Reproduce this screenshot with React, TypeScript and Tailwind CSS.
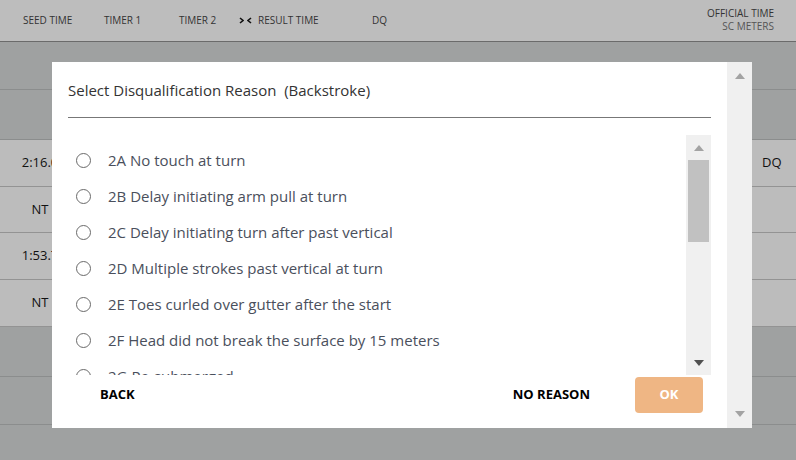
import React from 'react';

const reasons = [
  '2A No touch at turn',
  '2B Delay initiating arm pull at turn',
  '2C Delay initiating turn after past vertical',
  '2D Multiple strokes past vertical at turn',
  '2E Toes curled over gutter after the start',
  '2F Head did not break the surface by 15 meters',
  '2G Re-submerged',
];

const rows = [
  { h: 'h-[48px]', tone: 'dark', time: '', dq: '' },
  { h: 'h-[50px]', tone: 'dark', time: '', dq: '' },
  { h: 'h-[47px]', tone: 'light', time: '2:16.0', dq: 'DQ' },
  { h: 'h-[46px]', tone: 'light', time: 'NT', dq: '' },
  { h: 'h-[47px]', tone: 'light', time: '1:53.7', dq: '' },
  { h: 'h-[47px]', tone: 'light', time: 'NT', dq: '' },
  { h: 'h-[50px]', tone: 'dark', time: '', dq: '' },
  { h: 'h-[48px]', tone: 'dark', time: '', dq: '' },
];

const Triangle = ({ up, color }: { up?: boolean; color: string }) => (
  <svg width="10" height="6" viewBox="0 0 10 6">
    <polygon points={up ? '0,6 5,0 10,6' : '0,0 10,0 5,6'} fill={color} />
  </svg>
);

export default function App() {
  return (
    <div
      className="relative w-[796px] h-[460px] overflow-hidden bg-[#9fa1a1]"
      style={{ fontFamily: '"Open Sans", "Noto Sans", Arial, sans-serif' }}
    >
      {/* Header */}
      <div className="h-[42px] bg-[#bdbdbd] border-b border-[#6b6b6b] flex items-center text-[10px] text-[#333] relative">
        <span className="absolute left-[23px] top-[13px]">SEED TIME</span>
        <span className="absolute left-[104px] top-[13px]">TIMER 1</span>
        <span className="absolute left-[179px] top-[13px]">TIMER 2</span>
        <span className="absolute left-[239px] top-[13px] flex items-center gap-[6px]">
          <span className="flex items-center gap-[1px] font-bold text-black">
            <svg width="5" height="7" viewBox="0 0 5 7"><path d="M1 1 L4 3.5 L1 6" stroke="#111" strokeWidth="1.6" fill="none" /></svg>
            <svg width="5" height="7" viewBox="0 0 5 7" className="ml-[2px]"><path d="M4 1 L1 3.5 L4 6" stroke="#111" strokeWidth="1.6" fill="none" /></svg>
          </span>
          RESULT TIME
        </span>
        <span className="absolute left-[372px] top-[13px]">DQ</span>
        <div className="absolute right-[22px] top-[7px] text-right leading-[13px]">
          <div>OFFICIAL TIME</div>
          <div className="text-[#555]">SC METERS</div>
        </div>
      </div>

      {/* Rows */}
      {rows.map((r, i) => (
        <div
          key={i}
          className={`${r.h} flex items-center border-b text-[13px] text-[#111] ${
            r.tone === 'light' ? 'bg-[#bcbcbc] border-[#939393]' : 'bg-[#9fa1a1] border-[#8b8d8d]'
          }`}
        >
          <div className="w-[80px] text-center">{r.time}</div>
          <div className="flex-1" />
          <div className="w-[34px]">{r.dq}</div>
        </div>
      ))}

      {/* Modal */}
      <div className="absolute left-[52px] top-[62px] w-[700px] h-[366px] bg-white flex">
        <div className="w-[675px] flex flex-col px-4">
          <div className="h-[56px] flex items-center border-b border-[#777] text-[15px] text-[#333] pt-[1px]">
            Select Disqualification Reason&nbsp;&nbsp;(Backstroke)
          </div>
          <div className="mt-[17px] h-[240px] flex">
            <div className="flex-1 overflow-hidden pt-[7px]">
              {reasons.map((r) => (
                <div key={r} className="h-[36px] flex items-center pl-2 text-[15px] text-[#4a4f5c]">
                  <span className="w-[15px] h-[15px] rounded-full border-[1.5px] border-[#6a6a6a] mr-[17px] shrink-0" />
                  {r}
                </div>
              ))}
            </div>
            <div className="w-[25px] bg-[#f0f0f0] flex flex-col items-center">
              <div className="h-[25px] flex items-center justify-center">
                <Triangle up color="#a3a3a3" />
              </div>
              <div className="w-[21px] h-[82px] bg-[#c1c1c1]" />
              <div className="flex-1" />
              <div className="h-[25px] flex items-center justify-center">
                <Triangle color="#505050" />
              </div>
            </div>
          </div>
          <div className="flex items-center h-[37px] mt-[1px] text-[13px] font-bold text-black">
            <button className="ml-8">BACK</button>
            <div className="flex-1" />
            <button className="mr-[45px]">NO REASON</button>
            <button className="w-[68px] h-[36px] rounded-[4px] bg-[#efb684] text-white mr-2">OK</button>
          </div>
        </div>
        <div className="w-[25px] bg-[#f0f0f0] flex flex-col items-center justify-between py-[11px]">
          <Triangle up color="#a3a3a3" />
          <Triangle color="#a3a3a3" />
        </div>
      </div>
    </div>
  );
}
